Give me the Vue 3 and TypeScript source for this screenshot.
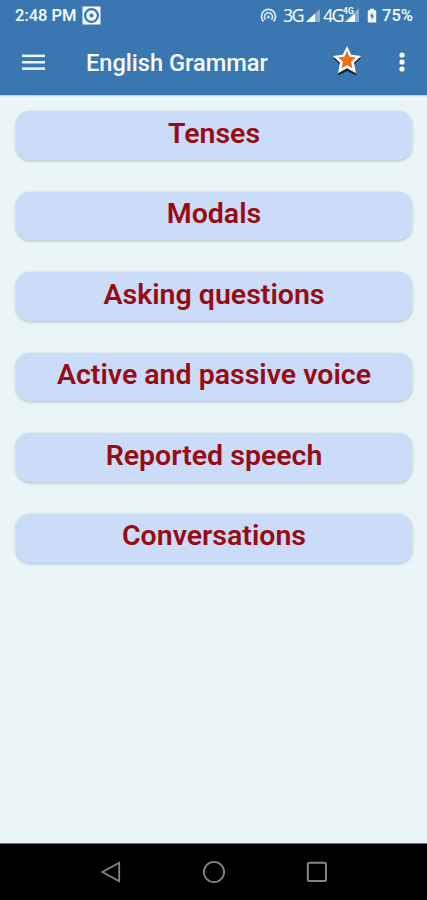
<script setup lang="ts">
interface Topic {
  id: string
  title: string
}

const topics: Topic[] = [
  { id: 'tenses', title: 'Tenses' },
  { id: 'modals', title: 'Modals' },
  { id: 'questions', title: 'Asking questions' },
  { id: 'voice', title: 'Active and passive voice' },
  { id: 'reported', title: 'Reported speech' },
  { id: 'conversations', title: 'Conversations' },
]
</script>

<template>
  <div class="screen">
    <header class="top">
      <div class="status">
        <span class="time">2:48 PM</span>
        <svg class="recorder" width="19" height="19" viewBox="0 0 19 19">
          <rect x="0.5" y="0.5" width="18" height="18" fill="#f4f9fd" />
          <circle cx="9.5" cy="9.5" r="6.4" fill="none" stroke="#3a77b1" stroke-width="2.3" />
          <circle cx="9.5" cy="9.5" r="2" fill="#3a77b1" />
        </svg>
        <svg class="hotspot" width="17" height="16" viewBox="0 0 17 16" fill="none" stroke="#dceaf6" stroke-width="1.7">
          <path d="M3.6 14.4A7 7 0 1 1 13.4 14.4" />
          <path d="M5.6 12.6A4 4 0 1 1 11.4 12.6" />
          <circle cx="8.5" cy="10" r="1.4" fill="#dceaf6" stroke="none" />
        </svg>
        <span class="network first">3G</span>
        <svg class="signal" width="14" height="13" viewBox="0 0 14 13">
          <path d="M0 13L14 0V13Z" fill="#86aed3" />
          <path d="M0 13L9 4.6V13Z" fill="#fff" />
        </svg>
        <span class="network second">4G</span>
        <span class="dual">
          <svg width="17" height="16" viewBox="0 0 17 16">
            <path d="M1 15L16 1V15Z" fill="#86aed3" />
            <path d="M3 15L12 6.5V15Z" fill="#fff" />
          </svg>
          <span class="badge">4G</span>
        </span>
        <svg class="battery" width="10" height="16" viewBox="0 0 10 16">
          <path d="M3 1.7H7V3.3H9.2V15.5H0.8V3.3H3Z" fill="#f4f9fd" />
          <path d="M5.7 5L2.8 9.6H4.8L4.3 13.3L7.3 8.6H5.3Z" fill="#3a77b1" />
        </svg>
        <span class="percent">75%</span>
      </div>
      <div class="toolbar">
        <svg class="menu" width="24" height="18" viewBox="0 0 24 18" fill="#eef5fb">
          <rect x="1" y="0.6" width="23" height="2.5" />
          <rect x="1" y="7" width="23" height="2.5" />
          <rect x="1" y="13.4" width="23" height="2.5" />
        </svg>
        <h1 class="title">English Grammar</h1>
        <svg class="star" width="34" height="34" viewBox="0 0 34 34">
          <path class="star-shadow" d="M17 4L21 12.8L31 14L24 20.6L26.3 31.6L17 27L8.2 31.6L10.2 20.6L3 14L13 12.8Z" />
          <path d="M17 2L21.2 10.8L31.2 12L24 18.8L26 29.2L17 24.3L8 29.2L10 18.8L2.8 12L12.8 10.8Z" fill="#fff" />
          <path d="M17 6.8L19.6 12.8L26 13.4L21.1 17.8L22.5 24.2L17 20.9L11.5 24.2L12.9 17.8L8 13.4L14.4 12.8Z" fill="#f06c18" />
        </svg>
        <svg class="more" width="6" height="22" viewBox="0 0 6 22" fill="#fff">
          <circle cx="3" cy="4" r="2.6" />
          <circle cx="3" cy="11" r="2.6" />
          <circle cx="3" cy="18" r="2.6" />
        </svg>
      </div>
    </header>

    <main class="topics">
      <button v-for="topic in topics" :key="topic.id" class="topic" type="button">
        <span class="label">{{ topic.title }}</span>
      </button>
    </main>

    <nav class="navigation">
      <svg width="22" height="24" viewBox="0 0 22 24" fill="none" stroke="#858585" stroke-width="1.8">
        <path d="M19.2 2.8V21.2L2.4 12Z" />
      </svg>
      <svg width="24" height="24" viewBox="0 0 24 24" fill="none" stroke="#858585" stroke-width="1.8">
        <circle cx="12" cy="12" r="10.1" />
      </svg>
      <svg width="22" height="24" viewBox="0 0 22 24" fill="none" stroke="#858585" stroke-width="2">
        <rect x="1.8" y="2.8" width="18.2" height="18.2" rx="1.5" />
      </svg>
    </nav>
  </div>
</template>

<style>
body {
  margin: 0;
}
</style>

<style scoped>
.screen {
  display: flex;
  flex-direction: column;
  width: 427px;
  height: 900px;
  overflow: hidden;
  background: #e9f5f7;
  font-family: Roboto, sans-serif;
}

svg {
  display: block;
  flex: none;
}

.top {
  flex: none;
  height: 95px;
  color: #f7fbff;
  background: #3a77b1;
  box-shadow: 0 1px 1px #bed3df;
}

.status {
  display: flex;
  align-items: center;
  height: 30px;
  padding-left: 15px;
  font-size: 16.5px;
  line-height: 30px;
  white-space: nowrap;
}

.time {
  width: 62px;
  padding-top: 1px;
  font-size: 16.5px;
  font-weight: 500;
}

.recorder {
  margin-left: 5px;
}

.hotspot {
  margin-left: 159px;
}

.network {
  font-family: "Noto Sans", sans-serif;
  font-size: 18px;
  letter-spacing: -1.7px;
}

.first {
  width: 20px;
  margin-left: 6px;
}

.signal {
  margin-left: 3px;
}

.second {
  width: 20px;
  margin-left: 3px;
}

.dual {
  position: relative;
}

.badge {
  position: absolute;
  top: 0;
  left: 0;
  font-size: 8.5px;
  font-weight: 700;
  line-height: 9px;
}

.battery {
  margin-left: 7px;
}

.percent {
  margin-left: 5px;
  padding-top: 1px;
  font-size: 16.5px;
  font-weight: 500;
}

.toolbar {
  display: flex;
  align-items: center;
  height: 65px;
  padding-left: 21px;
}

.title {
  width: 184px;
  margin: 1px 0 0 41px;
  font-size: 23.6px;
  font-weight: 500;
  line-height: 32px;
  white-space: nowrap;
}

.star {
  margin: -3px 0 0 60px;
}

.star-shadow {
  fill: #17212b;
  filter: blur(0.6px);
}

.more {
  margin: -1px 0 0 34.6px;
}

.topics {
  display: flex;
  flex: 1;
  flex-direction: column;
  gap: 32px;
  padding: 16px 15px 0 16px;
}

.topic {
  display: flex;
  justify-content: center;
  height: 48.6px;
  padding: 0;
  border: 0;
  border-radius: 14px;
  background: #cadcf8;
  box-shadow: 0 1px 3px rgb(50 80 90 / 32%);
  font-family: inherit;
}

.label {
  padding-top: 5.5px;
  color: #980b13;
  font-size: 28.5px;
  font-weight: 600;
  line-height: 33px;
  white-space: nowrap;
}

.navigation {
  display: flex;
  flex: none;
  align-items: center;
  justify-content: space-between;
  box-sizing: border-box;
  height: 57px;
  padding: 0 99px 0 100px;
  border-top: 1px solid #717778;
  background: #000;
}
</style>
